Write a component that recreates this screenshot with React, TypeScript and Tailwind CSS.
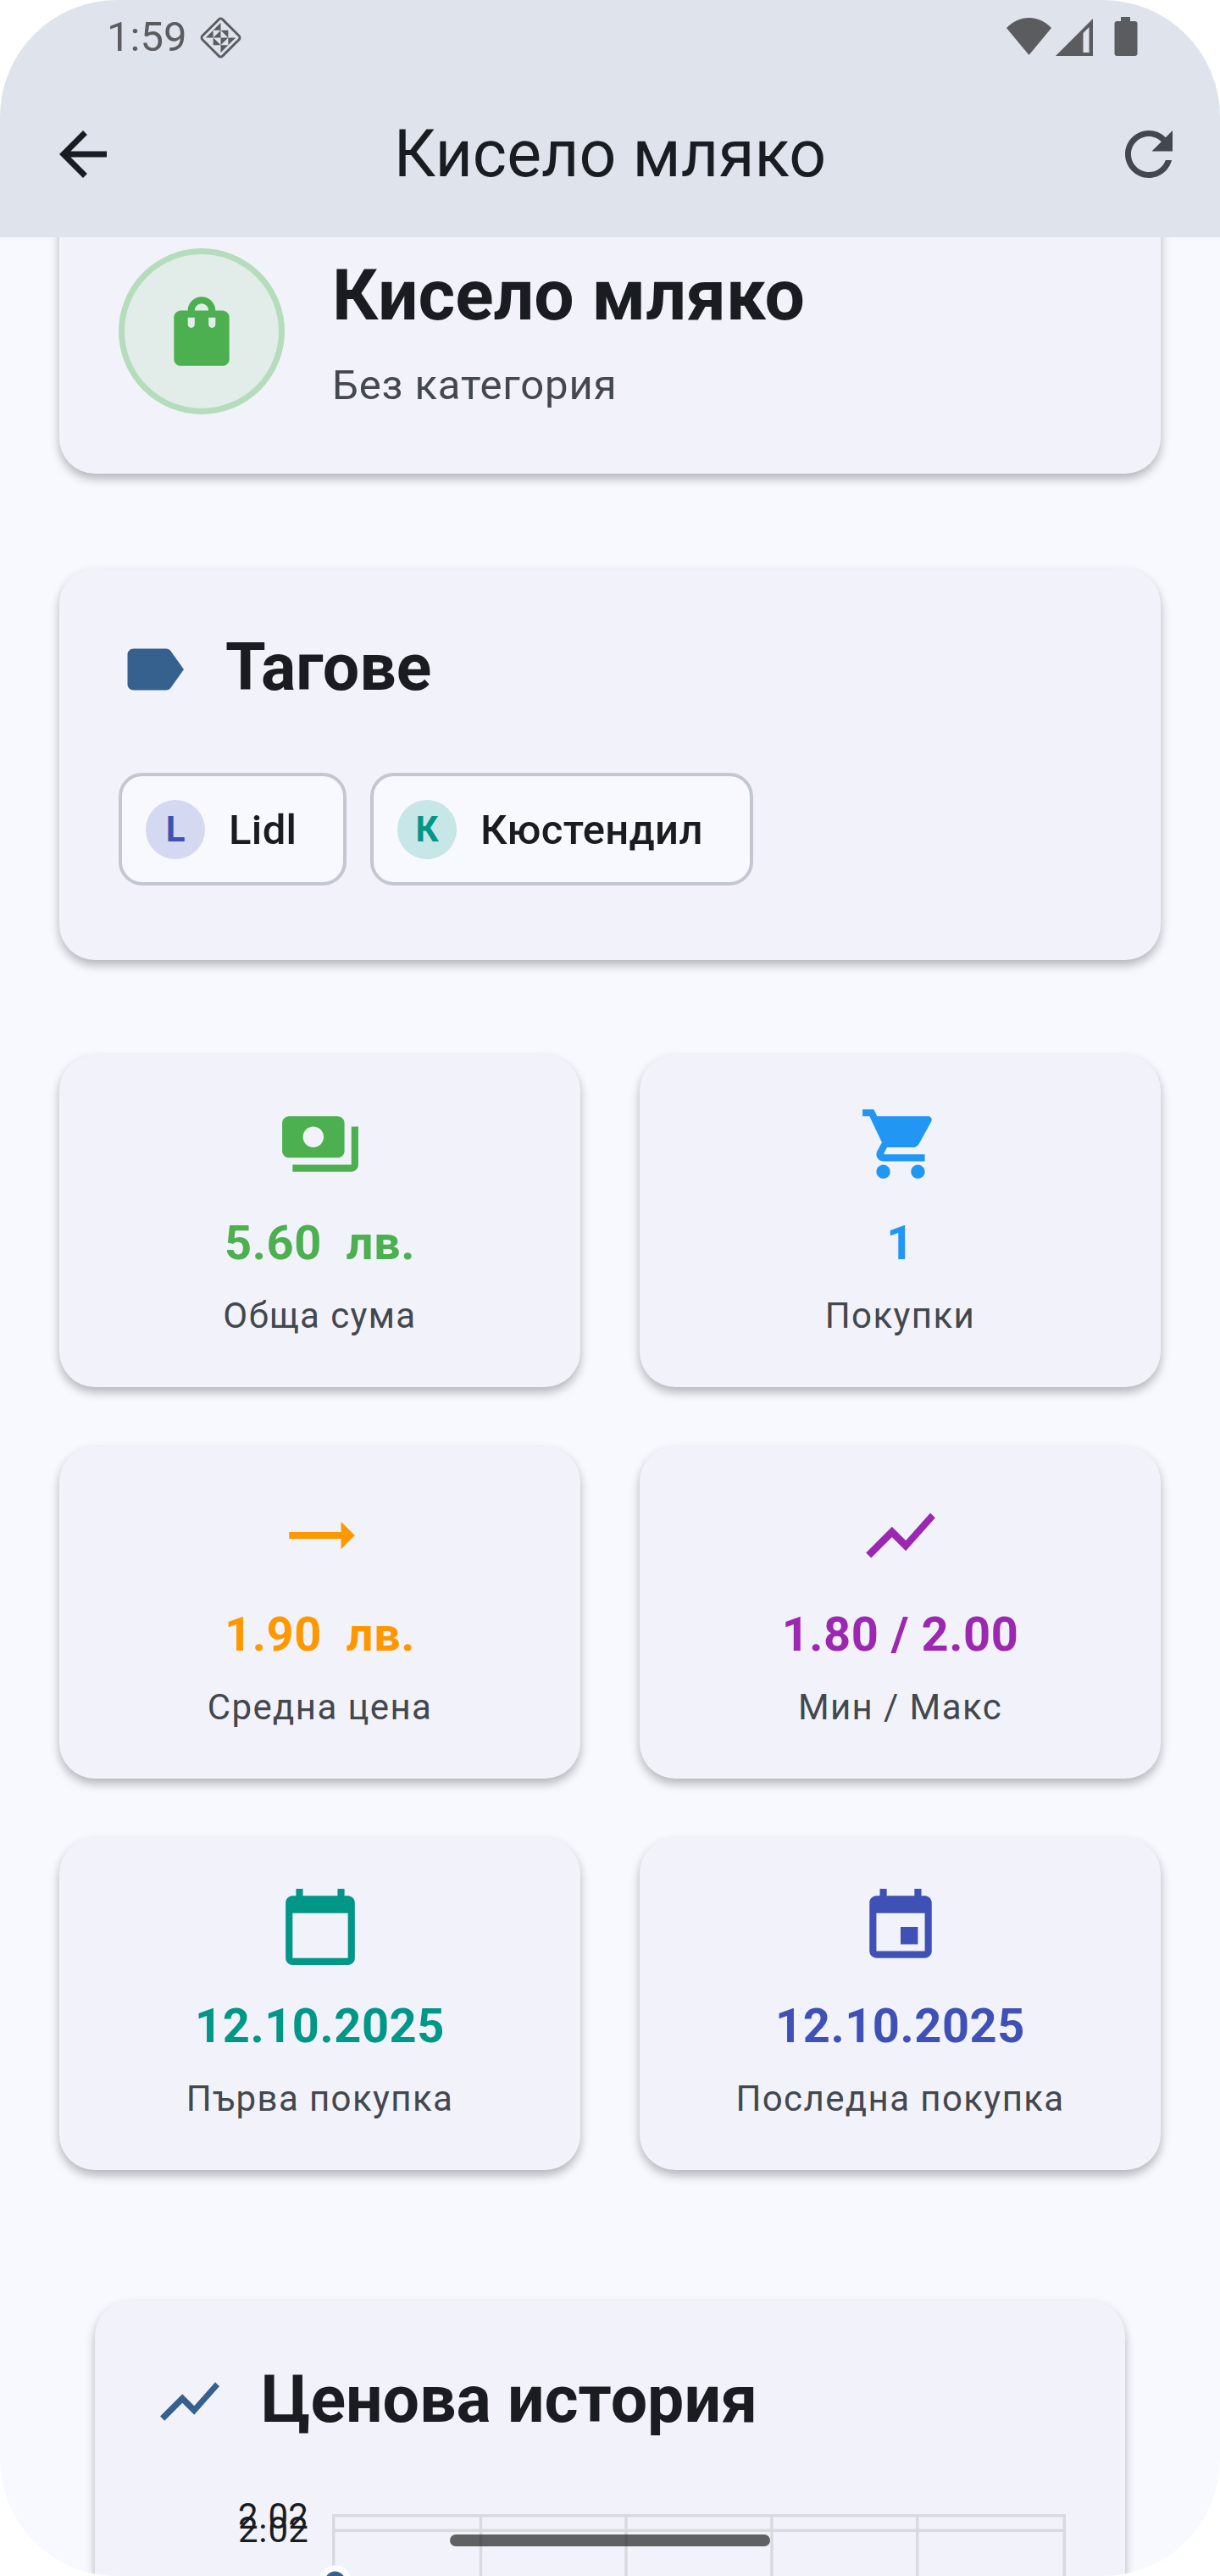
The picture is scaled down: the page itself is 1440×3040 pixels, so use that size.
import React from "react";
import {
  MdArrowBack,
  MdCalendarToday,
  MdEvent,
  MdLabel,
  MdPayments,
  MdRefresh,
  MdShoppingBag,
  MdShoppingCart,
  MdShowChart,
  MdTrendingFlat
} from "react-icons/md";
import type { IconType } from "react-icons";

interface Stat {
  icon: IconType;
  value: string;
  label: string;
  color: string;
}

interface Tag {
  letter: string;
  name: string;
  avatar: string;
  width: string;
}

const CARD =
  "rounded-[42px] bg-[#f2f3fa] shadow-[0_6px_12px_rgba(0,0,0,0.28)]";

const stats: Stat[] = [
  { icon: MdPayments, value: "5.60\u00a0 лв.", label: "Обща сума", color: "text-[#4caf50]" },
  { icon: MdShoppingCart, value: "1", label: "Покупки", color: "text-[#2196f3]" },
  { icon: MdTrendingFlat, value: "1.90\u00a0 лв.", label: "Средна цена", color: "text-[#ff9800]" },
  { icon: MdShowChart, value: "1.80 / 2.00", label: "Мин / Макс", color: "text-[#9c27b0]" },
  { icon: MdCalendarToday, value: "12.10.2025", label: "Първа покупка", color: "text-[#009688]" },
  { icon: MdEvent, value: "12.10.2025", label: "Последна покупка", color: "text-[#3f51b5]" }
];

const tags: Tag[] = [
  { letter: "L", name: "Lidl", avatar: "bg-[#d4d8f0] text-[#3f51b5]", width: "w-[269px]" },
  { letter: "К", name: "Кюстендил", avatar: "bg-[#c6e6e7] text-[#009688]", width: "w-[452px]" }
];

function StatusBar() {
  return (
    <div className="flex h-[84px] items-center pl-[126px] pt-[4px] text-[#5b5c5f]">
      <span className="w-[94px] text-[49px] leading-[80px]">1:59</span>
      <svg className="ml-[14px] size-[53px]" viewBox="0 0 52 52" fill="currentColor">
        <rect
          x="9.5"
          y="9.5"
          width="33"
          height="33"
          rx="3"
          transform="rotate(45 26 26)"
          fill="none"
          stroke="currentColor"
          strokeWidth="2.8"
        />
        <path d="M26 8.6v8.7h-8.7zM17.3 17.3V26H8.6zM26 17.3V26h-8.7zM26 17.3h8.7V26zM17.3 26v8.7H26zM26 26h8.7L26 34.7zM34.7 26h8.7l-8.7 8.7zM26 34.7h8.7L26 43.4z" />
      </svg>
      <svg className="-mt-[2px] ml-auto mr-[97px] h-[46px] w-[155px]" viewBox="0 0 155 46" fill="currentColor">
        <path d="M0 13C15-3 38-3 53 13L26.5 45z" />
        <path fillRule="evenodd" d="M58 46L102 2v44zM90.500 19v23h7V12z" />
        <path d="M135 0h11v5h5.500q3 0 3 3v35q0 3-3 3h-21q-3 0-3-3V8q0-3 3-3h4.500z" />
      </svg>
    </div>
  );
}

function AppBar() {
  return (
    <div className="flex h-[196px] items-center justify-between pl-[56px] pr-[42px]">
      <MdArrowBack className="size-[84px] text-[#191c20]" />
      <h1 className="ml-[-14px] text-[77px] leading-[98px] text-[#191c20]">Кисело мляко</h1>
      <MdRefresh className="size-[84px] text-[#43474e]" />
    </div>
  );
}

function SectionTitle({ icon: Icon, title }: { icon: IconType; title: string }) {
  return (
    <div className="flex h-[98px] items-center gap-[42px]">
      <Icon className="size-[84px] text-[#36618e]" />
      <h2 className="pb-[4px] text-[77px] font-bold leading-[94px]">{title}</h2>
    </div>
  );
}

function TagChip({ tag }: { tag: Tag }) {
  return (
    <div
      className={`flex h-[133px] items-center gap-[28px] rounded-[28px] border-4 border-[#c3c7cf] bg-[#f8f9ff] pl-[28px] ${tag.width}`}
    >
      <span
        className={`flex size-[70px] items-center justify-center rounded-full text-[42px] font-bold ${tag.avatar}`}
      >
        {tag.letter}
      </span>
      <span className="pt-[3px] text-[49px] font-medium tracking-[0.35px]">{tag.name}</span>
    </div>
  );
}

function StatCard({ stat }: { stat: Stat }) {
  const Icon = stat.icon;
  return (
    <div className={`flex h-[392px] flex-col items-center p-[56px] ${CARD}`}>
      <Icon className={`size-[98px] ${stat.color}`} />
      <div
        className={`mt-[26px] whitespace-nowrap text-[56px] font-bold leading-[84px] tracking-[0.525px] ${stat.color}`}
      >
        {stat.value}
      </div>
      <div className="mt-[16px] whitespace-nowrap text-[42px] leading-[56px] tracking-[1.4px] text-[#43474e]">
        {stat.label}
      </div>
    </div>
  );
}

function PriceChart() {
  return (
    <svg className="mt-[44px] h-[240px] w-[1076px]" viewBox="182 2927 1076 240">
      <g fontSize="42" letterSpacing="0.35" fill="#191c20">
        <text x="281" y="2984">2.02</text>
        <text x="281" y="3000">2.02</text>
      </g>
      <g stroke="#000" strokeOpacity="0.1" strokeWidth="3.5">
        <path d="M392 2968.75h866M393.75 2970.5v197M1256.25 2970.5v197" />
        <path d="M395.5 2986.25h859M567.5 2970.5v197M739 2970.5v197M911 2970.5v197M1082.75 2970.5v197" />
      </g>
      <circle cx="395.5" cy="3046.5" r="15.5" fill="#36618e" stroke="#fff" strokeWidth="7" />
    </svg>
  );
}

export default function App(): React.JSX.Element {
  return (
    <div className="h-[3040px] w-[1440px] bg-white font-[Roboto,sans-serif] text-[#191c20]">
      <div className="relative flex h-full flex-col overflow-hidden rounded-[138px] bg-[#f8f9ff]">
        <header className="z-10 h-[280px] shrink-0 bg-[#dfe3eb]">
          <StatusBar />
          <AppBar />
        </header>

        <main className="flex flex-col px-[70px]">
          <section className={`-mt-[57px] flex items-center gap-[56px] p-[70px] ${CARD}`}>
            <div className="flex size-[196px] items-center justify-center rounded-full border-[7px] border-[#b5dcbb] bg-[#e2ece9]">
              <MdShoppingBag className="size-[98px] text-[#4caf50]" />
            </div>
            <div>
              <div className="text-[84px] font-bold leading-[112px]">Кисело мляко</div>
              <div className="mt-[15px] text-[49px] leading-[69px] tracking-[0.875px] text-[#43474e]">
                Без категория
              </div>
            </div>
          </section>

          <section className={`mt-[112px] h-[462px] p-[70px] ${CARD}`}>
            <SectionTitle icon={MdLabel} title="Тагове" />
            <div className="mt-[73px] flex gap-[28px]">
              {tags.map((tag) => (
                <TagChip key={tag.name} tag={tag} />
              ))}
            </div>
          </section>

          <section className="mt-[112px] grid grid-cols-2 gap-[70px]">
            {stats.map((stat) => (
              <StatCard key={stat.label} stat={stat} />
            ))}
          </section>

          <section className={`mx-[42px] mt-[154px] p-[70px] ${CARD}`}>
            <SectionTitle icon={MdShowChart} title="Ценова история" />
            <PriceChart />
          </section>
        </main>

        {/* gesture navigation handle */}
        <div className="absolute bottom-[35px] left-[531px] z-20 h-[14px] w-[378px] rounded-full bg-black/60" />
      </div>
    </div>
  );
}
